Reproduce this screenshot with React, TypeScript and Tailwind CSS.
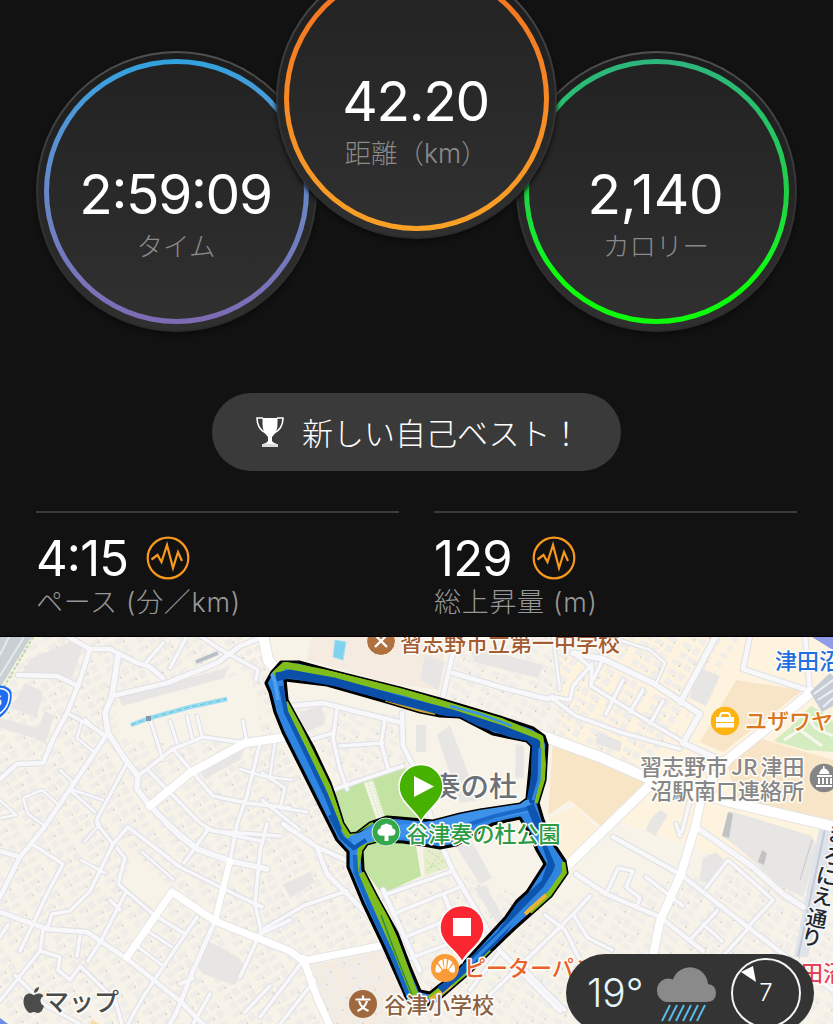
import type { ReactNode } from 'react';

interface Road {
  d: string;
  w: number;
}

const ROADS: Road[] = [
  { d: 'M67 636L90 649L110 649L133 661L150 667L163 678', w: 5 },
  { d: 'M90 649L78 686L67 713L53 739L43 763L17 764L0 779', w: 5 },
  { d: 'M18 675L57 676L78 686', w: 5 },
  { d: 'M118 656L112 696L105 713L108 733L125 759L138 776L137 789L150 806L180 836L197 849', w: 6 },
  { d: 'M112 696L167 683L217 663L240 646L275 632', w: 5 },
  { d: 'M200 636L220 649L258 670L256 680', w: 4 },
  { d: 'M187 636L170 668M163 643L144 665', w: 4 },
  { d: 'M67 713L82 721L107 736', w: 4 },
  { d: 'M108 733L70 789L43 829L20 857L0 851M20 857L0 897', w: 5 },
  { d: 'M127 763L97 819L97 824L113 844L90 891L70 911L52 914L47 929', w: 4 },
  { d: 'M60 770L73 782L70 789L103 800M70 790L95 812', w: 3 },
  { d: 'M82 721L77 738L95 753M85 719L104 737', w: 3 },
  { d: 'M147 769L200 823L213 831L280 836', w: 4 },
  { d: 'M173 749L213 796L247 803L290 808', w: 4 },
  { d: 'M150 719L163 760M170 721L177 743M187 716L192 738M197 716L202 736M243 721L247 743', w: 3.5 },
  { d: 'M138 776L173 749L203 737L245 743', w: 4 },
  { d: 'M240 769L262 776L292 780M275 742L270 776', w: 3 },
  { d: 'M260 743L247 796L237 824L230 861', w: 4 },
  { d: 'M0 800L16 815L0 818M23 798L42 790L60 806M23 798L28 814L45 826', w: 3 },
  { d: 'M32 844L63 864L47 894L20 951', w: 4 },
  { d: 'M0 912L47 929L87 932L130 961L180 1001L205 1026', w: 5 },
  { d: 'M167 824L197 849L230 861L267 869', w: 6 },
  { d: 'M113 844L128 827L180 867L220 887L262 907', w: 4 },
  { d: 'M117 848L125 858L118 884L153 914L185 934', w: 4 },
  { d: 'M125 894L103 937L88 961M110 900L120 910', w: 4 },
  { d: 'M197 917L163 967L143 997L128 1024', w: 4 },
  { d: 'M215 921L193 971L177 1011L170 1024', w: 5 },
  { d: 'M154 915L184 933M146 930L172 947M137 946L163 966', w: 3.5 },
  { d: 'M43 931L40 951L0 1001M15 975L45 1005L80 1024', w: 4 },
  { d: 'M40 951L60 957L58 970L70 980L80 966L115 1000L122 1024', w: 4 },
  { d: 'M80 936L77 956M0 937L8 925', w: 4 },
  { d: 'M290 920L260 934L240 977M267 824L260 851L255 904L262 934', w: 4 },
  { d: 'M207 829L260 841M207 831L184 863', w: 4 },
  { d: 'M142 852L174 880M81 860L105 873M84 842L100 824', w: 3 },
  { d: 'M210 994L193 1024M270 986L245 1012M180 984L193 978', w: 4 },
  { d: 'M283 824L317 847L327 874L377 924M317 847L350 862', w: 5 },
  { d: 'M260 931L305 905L347 891', w: 4 },
  { d: 'M303 961L260 1017M315 980L280 1024', w: 4 },
  { d: 'M387 894L453 871M393 914L460 887M403 938L452 918M411 958L448 944', w: 4 },
  { d: 'M383 890L420 971M444 895L456 925', w: 5 },
  { d: 'M402 713L403 746L417 773L435 830L453 871L500 951L560 1011', w: 5 },
  { d: 'M290 706L323 703L402 723', w: 5 },
  { d: 'M337 709L333 739L340 769L347 789', w: 4 },
  { d: 'M340 746L383 743M385 720L381 743L388 768', w: 4 },
  { d: 'M335 789L403 766M300 743L333 733', w: 4 },
  { d: 'M457 636L443 696M453 673L500 687L547 699L553 697', w: 5 },
  { d: 'M553 636L560 690', w: 3 },
  { d: 'M262 773L285 788L280 808L307 812M262 800L300 830', w: 3.5 },
  { d: 'M573 653L603 659L653 683L700 714L683 743', w: 6 },
  { d: 'M716 636L680 703', w: 6 },
  { d: 'M683 743L726 763', w: 6 },
  { d: 'M750 636L743 669L810 691L805 636', w: 5 },
  { d: 'M573 653L592 668L591 686L636 714L680 740', w: 4 },
  { d: 'M553 699L576 716L620 732L680 749', w: 4 },
  { d: 'M592 664L573 686L570 700L553 697', w: 4 },
  { d: 'M623 680L606 714M643 690L630 712M663 701L650 724M603 659L591 684', w: 4 },
  { d: 'M617 639L650 650L665 663L656 684', w: 3 },
  { d: 'M613 837L680 874L753 931L800 967L833 990', w: 5 },
  { d: 'M696 827L753 867L783 894L803 907', w: 6 },
  { d: 'M728 860L773 900L747 928M728 860L706 888', w: 4 },
  { d: 'M576 874L606 894L660 917L703 951', w: 5 },
  { d: 'M606 894L618 868L633 871L626 887L640 898L636 908', w: 4 },
  { d: 'M553 934L573 914L590 896M573 914L588 938L612 950', w: 4 },
  { d: 'M646 877L683 906M717 911L689 941M703 924L722 941M680 836L676 824', w: 4 },
  { d: 'M747 930L724 955M690 800L682 832', w: 4 },
  { d: 'M560 927L473 1011M545 915L565 930L590 980M520 965L565 1010M500 951L470 990', w: 4 },
];

const MAIN_ROADS: Road[] = [
  { d: 'M150 806L190 773L245 743L300 735', w: 8 },
  { d: 'M127 957L172 892L215 921L290 951L303 961L390 944', w: 7 },
  { d: 'M230 861L215 921', w: 6 },
  { d: 'M303 958L317 997L330 1026', w: 7 },
  { d: 'M262 630L268 660L278 672', w: 10 },
  { d: 'M540 735L600 757L650 779L730 802L840 828', w: 10 },
  { d: 'M812 692L726 761L650 785L565 868L470 965L425 1004', w: 9 },
  { d: 'M726 763L703 789L696 824L681 874L660 921L653 956', w: 8 },
];

const BLOCKS = [
  'M25 683L43 692L37 718L11 708Z',
  'M45 711L54 716L45 744L34 738Z',
  'M32 658L70 642L82 648L72 678L22 672Z',
  'M118 696L228 668L224 678L122 706Z',
  'M0 718L38 728L34 738L0 728Z',
  'M208 941L240 958L246 970L234 985L203 974L198 968Z',
  'M200 770L245 748L240 760L205 779Z',
  'M300 712L322 706L325 724L298 736Z',
  'M348 675L376 682L372 692L350 686Z',
  'M437 735L450 725L478 800L460 803Z',
  'M416 725L426 725L426 752L416 752Z',
  'M516 744L524 746L524 778L515 778Z',
  'M470 645L543 665L538 678L474 662Z',
  'M425 655L445 662L438 690L420 680Z',
  'M283 884L310 872L315 882L290 898Z',
  'M455 845L470 838L492 878L480 884Z',
  'M474 888L485 885L505 920L498 925Z',
  'M697 667L720 676L706 706L690 698Z',
  'M598 732L622 742L620 752L595 743Z',
  'M703 858L716 852L724 860L708 884L699 880Z',
  'M650 820L660 810L668 815L655 836L646 830Z',
];

// small house footprints are drawn by a rotated pattern over the whole map
const HousePattern = ({ id, angle, color }: { id: string; angle: number; color: string }) => (
  <pattern id={id} width="38" height="30" patternUnits="userSpaceOnUse" patternTransform={`rotate(${angle})`}>
    <path
      d="M2 3h9v6h-9zM13 2h7v8h-7zM23 4h10v6h-10zM4 13h7v7h-7zM13 14h10v5h-10zM26 13h7v8h-7zM1 23h10v5h-10zM14 22h7v6h-7zM23 24h9v5h-9z"
      fill={color}
    />
    <path d="M9 9h1M31 10h1M21 18h1M9 27h1" stroke="#aaa7a3" strokeWidth="1" />
  </pattern>
);

const ROUTE =
  'M266 683L272 672L281 662L299 662L332 671L400 688L440 699L500 717L533 728L544 736L547 745L545 780L538 803L543 820L553 843L565 861L567 873L551 896L514 929L490 952L470 972L440 998L425 1006L408 1003L404 992L383 945L363 903L348 867L348 852L337 840L317 800L297 760L283 732L275 712L270 692Z' +
  'M285 680L327 685L390 703L420 712L440 716L460 717L493 734L527 741L532 746L529 779L527 799L520 804L480 810L460 814L433 821L400 818L387 817L370 823L357 833L350 834L343 823L335 797L330 783L313 747L298 720L287 700Z' +
  'M362 851L367 844L378 841L403 842L423 845L440 848L456 845L493 824L520 818L530 834L537 850L545 864L527 892L517 901L506 917L483 942L465 962L453 976L440 985L430 993L420 991L410 967L397 933L377 897L363 870Z';

const Label = ({
  x,
  y,
  fill,
  size = 22,
  children,
}: {
  x: number;
  y: number;
  fill: string;
  size?: number;
  children: ReactNode;
}) => (
  <text
    x={x}
    y={y}
    fill={fill}
    fontSize={size}
    fontWeight={500}
    stroke="#fffdf8"
    strokeWidth={3}
    strokeLinejoin="round"
    paintOrder="stroke"
  >
    {children}
  </text>
);

const RouteMap = () => (
  <svg viewBox="0 637 833 387" className="block h-[387px] w-[833px] font-['Noto_Sans_CJK_JP',sans-serif]">
    <defs>
      <HousePattern id="houses-left" angle={-32} color="#f0ede9" />
      <HousePattern id="houses-right" angle={30} color="#f1eeea" />
      <clipPath id="route-clip">
        <path d={ROUTE} clipRule="evenodd" />
      </clipPath>
    </defs>
    <rect y="637" width="833" height="387" fill="#f8f3e8" />
    <path d="M560 637H833V900L700 850L560 800Z" fill="#fdf3df" />

    {/* land use */}
    <path d="M553 742L640 776L650 785L602 827L570 800L548 815Z" fill="#f8e5c5" />
    <path d="M736 680L803 690L723 752L700 742Z" fill="#f8e5c8" />
    <path d="M758 738L833 760V824L735 800L728 765Z" fill="#f8e5c8" />
    <path d="M548 818L575 806L598 828L566 860Z" fill="#fdf0d8" />
    <path d="M312 637L446 637L440 690L395 684L306 660Z" fill="#f5ebe1" />
    <path d="M312 966L386 948L403 994L408 1024H332L320 998Z" fill="#f4ebe1" />
    <path d="M225 637H262L256 668Z" fill="#faf5e8" />

    <rect y="637" width="265" height="387" fill="url(#houses-left)" />
    <path d="M265 637L420 1024H265Z" fill="url(#houses-left)" />
    <path d="M380 895L455 872L545 905L833 850V1024H430Z" fill="url(#houses-right)" />
    <path d="M455 637H740L650 775L545 735L450 700ZM290 705L400 715L410 765L345 788Z" fill="url(#houses-right)" />
    <path d="M115 708L250 672L262 735L180 745L118 738Z" fill="#f8f3e8" />
    <path d="M135 850L170 890L155 910L122 885Z" fill="#f8f3e8" />
    <g fill="#e8e6e4">
      {BLOCKS.map((d) => (
        <path key={d} d={d} />
      ))}
    </g>
    <path d="M730 811L812 836L818 850L803 897L778 885L757 864L735 845L722 836Z" fill="#e7e6e5" />
    <path d="M728 812l5 2-4 24-7-2zM762 850l5 3-3 12-6-3z" fill="#c3c2c3" />
    <path d="M812 840L800 880" stroke="#c9c8c8" fill="none" />

    {/* parks and water */}
    <path d="M335 792L405 767L425 820L400 818L387 816L357 834L347 834Z" fill="#c3e3a2" />
    <path d="M362 851L373 842L415 840L421 876L382 894L362 867Z" fill="#c3e3a2" />
    <path d="M364 783l9-3 12 38-8 3z" fill="#f3f4e6" />
    <path d="M368 782l12 37M372 781l11 37" stroke="#b9dca0" strokeDasharray="1 2" />
    <path d="M423 850L445 845L453 866L425 876Z" fill="#e5edcd" />
    <path d="M425 848l25 18M425 860l15 10M445 846l-18 26M450 858l-20 10" stroke="#bada9a" strokeDasharray="2 2" />
    <path d="M774 741L796 722L811 706L822 712L833 722V752L806 750Z" fill="#d5ecc0" />
    <path d="M784 740L800 730L822 746M806 714L815 728L833 736" stroke="#f7f7ef" strokeWidth="3" fill="none" />
    <path d="M335 640l11 2-3 18-10-3z" fill="#7fd3ef" stroke="#a9dff0" />

    {/* elevated road and rail */}
    <path d="M0 637H31L0 688Z" fill="#c9d0d4" />
    <path d="M9 637L0 655M24 637L0 676" stroke="#e5e9eb" strokeWidth="2" />
    <path d="M33 637L1 692" stroke="#b9d99a" strokeWidth="2" strokeDasharray="3 2" />
    <path d="M820 824L833 824V850L808 957H794Z" fill="#dfe3ea" />
    <path d="M826 824L798 957" stroke="#c3cad6" strokeWidth="2" />

    <g fill="none" strokeLinejoin="round" strokeLinecap="round">
      {ROADS.map((r) => (
        <path key={r.d} d={r.d} stroke="#dee0e5" strokeWidth={r.w + 1.6} />
      ))}
      {MAIN_ROADS.map((r) => (
        <path key={r.d} d={r.d} stroke="#e5e5e6" strokeWidth={r.w + 2} />
      ))}
      {ROADS.map((r) => (
        <path key={r.d} d={r.d} stroke="#f8f8fb" strokeWidth={r.w - 0.4} />
      ))}
      {MAIN_ROADS.map((r) => (
        <path key={r.d} d={r.d} stroke="#ffffff" strokeWidth={r.w} />
      ))}
    </g>

    <path d="M131 725L150 718L190 707L227 699" stroke="#9adcf0" strokeWidth="4.5" fill="none" />
    <path d="M131 725L150 718L190 707L227 699" stroke="#65bfe0" strokeDasharray="5 3" fill="none" />
    <rect x="146" y="716" width="5" height="5" fill="#7f9ba8" />
    <path d="M810 692L830 673L833 676V706L822 712Z" fill="#c6ccd6" />
    <path d="M814 694L833 680M818 700L833 690M823 707L833 698" stroke="#edf0f4" strokeWidth="2" />
    <path d="M812 637H833V650Z" fill="#8f9de8" />
    <path d="M0 1018L8 1024H0Z" fill="#6d8fe8" />
    <path d="M92 1020l8 4h-10z" fill="#f8dca8" />
    <path d="M196 662l22-9" stroke="#b9bfc8" strokeWidth="4" />

    {/* route shield */}
    <path d="M0 685.500Q9 686 11.500 692Q13 708 0 717.500Z" fill="#1d6df0" />
    <path d="M0 688.500Q7 689 9 694Q10 706 0 713.500" fill="none" stroke="#fff" strokeWidth="1.600" />
    <text x="-7" y="706" fill="#fff" fontSize="15" fontWeight={700}>
      6
    </text>

    <Label x={400} y={651} fill="#a65c32">
      習志野市立第一中学校
    </Label>
    <Label x={432} y={797} fill="#6b7079" size={28.5}>
      奏の杜
    </Label>

    {/* run track, coloured by pace */}
    <path d={ROUTE} fillRule="evenodd" fill="#2f85e2" stroke="#000" strokeWidth="3.2" strokeLinejoin="round" />
    <g clipPath="url(#route-clip)" fill="none" strokeLinejoin="round">
      <path d="M274 675L285 665L330 674L400 691L440 703L500 721L540 738L544 780L536 803" stroke="#7fbd1c" strokeWidth="7" />
      <path d="M286 702L297 724L328 787L340 822L348 835L372 821" stroke="#7fbd1c" strokeWidth="6" />
      <path d="M356 872L360 850L367 842L390 839" stroke="#7fbd1c" strokeWidth="5" />
      <path d="M363 872L393 940L416 1003" stroke="#7fbd1c" strokeWidth="10" />
      <path d="M566 862L566 873L551 894L530 912" stroke="#7fbd1c" strokeWidth="8" />
      <path d="M546 895L525 914" stroke="#e8b13c" strokeWidth="4" />
      <path d="M490 950L455 980L430 1000" stroke="#7fbd1c" strokeWidth="9" />
      <path d="M452 985L430 1000" stroke="#e8b13c" strokeWidth="4" />
      <path d="M276 677L290 674L335 682L400 700L450 713L500 729L536 743L535 780L530 803" stroke="#0b4fa8" strokeWidth="8.5" />
      <path d="M385 702L435 715" stroke="#c9a638" strokeWidth="2.5" />
      <path d="M450 706L480 714L512 726" stroke="#3d93ea" strokeWidth="2.5" />
      <path d="M540 748L539 780L533 800" stroke="#2f85e2" strokeWidth="3" />
      <path d="M281 686L286 712L308 757L326 795L340 830" stroke="#0f58b0" strokeWidth="4.5" />
      <path d="M271 673L275 682L278 700" stroke="#4fa0f0" strokeWidth="3.500" />
      <path d="M530 806L480 815L420 830L380 832L352 842" stroke="#3f92ea" strokeWidth="13" />
      <path d="M530 808L495 816L470 824L440 834" stroke="#1b69c9" strokeWidth="4" />
      <path d="M330 815L342 838L354 848L366 840" stroke="#0f58b0" strokeWidth="4.5" />
      <path d="M355 855L356 873L370 907L392 955L410 1000" stroke="#1767c5" strokeWidth="4.5" />
      <path d="M381 915L396 955L412 995" stroke="#2f8a4a" strokeWidth="1.5" />
      <path d="M530 805L545 842L552 862L545 883L520 906L500 935L465 968L440 990" stroke="#0d55ae" strokeWidth="8" />
      <path d="M543 832L558 867L545 888L510 924L472 962" stroke="#2e86df" strokeWidth="3.5" />
    </g>

    {/* places */}
    <circle cx="381" cy="641" r="14.5" fill="#b0713f" stroke="#fff" />
    <path d="M375 635l12 12M387 635l-12 12" stroke="#fff" strokeWidth="2.4" />
    <circle cx="386" cy="832" r="14" fill="#36a84c" stroke="#d9efd5" />
    <path
      d="M384.500 841v-5.500q-7 1-7-3.500 0-3 3-3.500 0-4 4-4 1.500-2 4 0 4 0 4 4 3 .5 3 3.500 0 4.500-7 3.500v5.500z"
      fill="#fff"
    />
    <Label x={406.5} y={842} fill="#2b9b46">
      谷津奏の杜公園
    </Label>
    <Label x={775} y={669} fill="#1f6fe0">
      津田沼
    </Label>
    <Label x={745} y={729} fill="#d97820">
      ユザワヤ
    </Label>
    <Label x={640} y={775} fill="#878787">
      習志野市
    </Label>
    <Label x={731} y={775} fill="#878787">
      JR
    </Label>
    <Label x={760.5} y={775} fill="#878787">
      津田
    </Label>
    <Label x={650} y={799} fill="#878787">
      沼駅南口連絡所
    </Label>
    <text
      x="826 822 815 811 805 800"
      y="840 862 882 902 924 943"
      rotate="11"
      fill="#24272c"
      fontSize="21"
      fontWeight={500}
      stroke="#f4f6fa"
      strokeWidth="3"
      paintOrder="stroke"
    >
      まろにえ通り
    </text>
    <Label x={464} y={976} fill="#e8622a">
      ピーターパン
    </Label>
    <Label x={384} y={1013} fill="#8c6043">
      谷津小学校
    </Label>
    <Label x={801} y={981} fill="#e5405c">
      田沼
    </Label>

    <circle cx="725" cy="721" r="14.300" fill="#fcb414" />
    <path d="M716 717h18v5h-18zM716 723h18v4.500h-18z" fill="#fff" />
    <path d="M720 717q0-4 3-4h4q3 0 3 4" fill="none" stroke="#fff" strokeWidth="1.800" />
    <circle cx="824" cy="778" r="14.300" fill="#858585" />
    <path
      d="M816 785h16v2h-16zM818 778h2v6h-2zM822 778h2v6h-2zM826 778h2v6h-2zM830 778h2v6h-2zM817 775h15v2h-15zM819 774q1-5 4-5.500v-2.500h1.500v2.500q4 .5 5 5.500z"
      fill="#fff"
    />
    <circle cx="445" cy="968" r="14" fill="#fb9b38" />
    {/* croissant */}
    <path
      d="M436 972.500q-1.500-4.500 1-8.500l5 6-2.500 2.500zM438 962.500q2-2.500 4-3l2 9-1 1zM443.500 959q1.500-.5 3.500 0l-1 10h-1.500zM448.500 959.500q2.500 1 4 3l-4.500 7-1-1zM453.500 964q2.500 4 1 8.500h-3.500l-2.500-2.500z"
      fill="#fff"
    />
    <circle cx="363" cy="1004" r="14" fill="#a0683f" />
    <path d="M355.500 999.500h15M363 995.500v4M359 1001q2 7 9.500 10M367 1001q-2 7-9.500 10" fill="none" stroke="#fff" strokeWidth="2.200" />

    {/* start and finish pins */}
    <path
      d="M421 822C417 811 399 803 399 786.500A22 22 0 0 1 443 786.500C443 803 425 811 421 822Z"
      fill="#46b100"
      stroke="#fff"
      strokeWidth="1.500"
    />
    <path d="M414 776L434 786.500L414 797Z" fill="#fff" />
    <path
      d="M462 962.500C458 951 440 944 440 927.500A22 22 0 0 1 484 927.500C484 944 466 951 462 962.500Z"
      fill="#fb2730"
      stroke="#fff"
      strokeWidth="1.500"
    />
    <rect x="453" y="918" width="18" height="18" fill="#fff" />

    {/* map credit */}
    <path
      d="M34 995q3-2 6-1.500 2.500.5 3.500 2.500-3.500 2-3 5.500.3 3 3.500 4.500-2 6-5.500 7-2 0-4-1-2 0-4 1c-3 0-7-6-7-11.500 0-6 3.500-8 6-8 2.500 0 3 1.500 4.500 1.500zM34 993q0-5 5-6 0 5-5 6z"
      fill="#4b4b4b"
    />
    <Label x={44} y={1011} fill="#4b4b4b" size={25}>
      マップ
    </Label>
  </svg>
);

interface DialProps {
  value: string;
  label: string;
  ring: string;
  className?: string;
  tracking?: string;
}

const Dial = ({ value, label, ring, className = '', tracking = 'tracking-[-1.3px]' }: DialProps) => (
  <div
    className={`h-[281px] w-[281px] shrink-0 rounded-full bg-gradient-to-b from-[#505050] via-[#333333] to-[#2b2b2b] p-[2px] shadow-[0_3px_4px_#0c0c0c] ${className}`}
  >
    <div className="h-full w-full rounded-full bg-gradient-to-b from-[#1c1c1c] to-[#303030] p-[6px]">
      <div className={`h-full w-full rounded-full bg-gradient-to-b p-[5px] ${ring}`}>
        <div className="flex h-full w-full flex-col items-center rounded-full bg-gradient-to-b from-[#222222] to-[#303030] pt-[102px]">
          <span
            className={`pr-[2px] font-['Inter',sans-serif] text-[55px] leading-[56px] text-white [font-feature-settings:'case'] ${tracking}`}
          >
            {value}
          </span>
          <span className="mt-[9px] pr-px font-['Inter','Noto_Sans_CJK_JP',sans-serif] text-[26.5px] leading-[30px] font-light text-[#8a8a8a]">
            {label}
          </span>
        </div>
      </div>
    </div>
  </div>
);

const PulseIcon = () => (
  <svg viewBox="0 0 44 44" className="h-[44px] w-[44px]" fill="none" stroke="#f7981d">
    <circle cx="22" cy="22" r="20.300" strokeWidth="2.200" />
    <path d="M5.500 23.500L11.500 19L15.500 26L21 9L27 32L32 16L36 25" strokeWidth="2.200" />
  </svg>
);

const Stat = ({ value, label, width }: { value: string; label: string; width: string }) => (
  <div className="w-[363px] border-t-2 border-[#3c3c3c] pt-[21px]">
    <div className="flex h-[48px] items-center">
      <span
        className={`pt-[1px] font-['Inter',sans-serif] text-[49px] leading-[48px] tracking-[-0.8px] text-white [font-feature-settings:'case'] ${width}`}
      >
        {value}
      </span>
      <PulseIcon />
    </div>
    <div className="mt-[5px] font-['Inter','Noto_Sans_CJK_JP',sans-serif] text-[27px] leading-[32px] font-light tracking-[0.7px] whitespace-pre text-[#979797]">
      {label}
    </div>
  </div>
);

const TrophyIcon = () => (
  <svg viewBox="0 0 28 30" className="h-[30px] w-[28px]" fill="#ffffff">
    <path d="M6.500 1h15v6q0 8-5.500 13v4q1 2 5 3H7q4-1 5-3v-4q-5.500-5-5.500-13z" />
    <path d="M6 27h16v3H6z" fill="#dddddd" />
    <path d="M7 1H1Q1 12 10.500 16.500M21 1h6q0 11-9.500 15.500" fill="none" stroke="#ffffff" strokeWidth="1.600" />
  </svg>
);

const WeatherBadge = () => (
  <div className="absolute bottom-[-8px] left-[566px] flex h-[78px] w-[248px] items-center rounded-full bg-[#343434] pl-[21px]">
    <span className="w-[67px] font-['Inter',sans-serif] text-[39px] leading-[40px] font-light text-[#e6f5fa]">19°</span>
    <svg viewBox="0 0 64 60" className="h-[60px] w-[64px]">
      <path
        d="M12 39A12 12 0 0 1 11 16Q14 15 19 16.500A18 18 0 0 1 54 21Q62 22 62 30Q62 39 52 39Z"
        fill="#8a8a8a"
      />
      <path d="M16 42L8 58M23 42L15 58M30 42L22 58M37 42L29 58M44 42L36 58M51 42L43 58" stroke="#5db9e6" strokeWidth="2" />
    </svg>
    <div className="ml-[13px] flex h-[70px] w-[70px] items-center justify-center rounded-full border-[2.500px] border-[#f4f4f4]">
      <svg viewBox="0 0 66 66" className="absolute h-[66px] w-[66px]">
        <path d="M8 12L20 6L23 22Z" fill="#ffffff" />
      </svg>
      <span className="font-['Inter',sans-serif] text-[24px] leading-none font-light text-white">7</span>
    </div>
  </div>
);

export default function App() {
  return (
    <div className="relative h-[1024px] w-[833px] overflow-hidden bg-[#121212] font-['Noto_Sans_CJK_JP',sans-serif]">
      <section className="h-[637px] overflow-hidden border-b border-black">
        <div className="flex h-[393px] items-start pl-[36px]">
          <Dial value="2:59:09" label="タイム" ring="from-[#2fa3df] to-[#7e6bb4]" className="mt-[51px]" />
          <Dial
            value="42.20"
            label="距離（km）"
            ring="from-[#f36f21] to-[#f9a127]"
            className="z-10 mt-[-42px] ml-[-41px]"
          />
          <Dial
            value="2,140"
            label="カロリー"
            ring="from-[#2db67d] via-[#1fd044] via-50% to-[#0cfc0c] to-80%"
            className="mt-[51px] ml-[-41px]"
            tracking="tracking-[-0.2px]"
          />
        </div>
        <div className="ml-[212px] flex h-[78px] w-[409px] items-center gap-[18px] rounded-full bg-[#3a3a3a] pl-[44px]">
          <TrophyIcon />
          <span className="text-[31px] leading-[40px] font-light text-white">新しい自己ベスト！</span>
        </div>
        <div className="mt-[40px] flex gap-[35px] pl-[36px]">
          <Stat value="4:15" label="ペース (分／km)" width="w-[110px]" />
          <Stat value="129" label="総上昇量 (m)" width="w-[98px]" />
        </div>
      </section>
      <RouteMap />
      <WeatherBadge />
    </div>
  );
}
